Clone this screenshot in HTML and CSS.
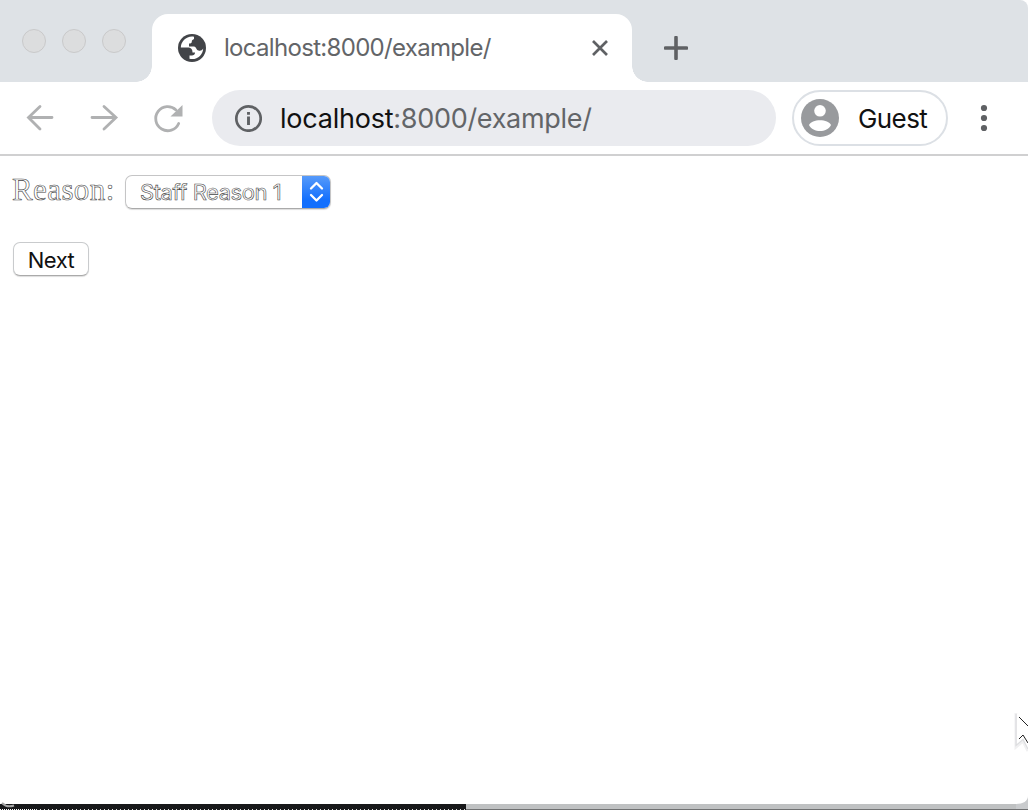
FILE: index.html
```html
<!DOCTYPE html>
<html lang="en">
<head>
<meta charset="utf-8">
<title>localhost:8000/example/</title>
<link rel="stylesheet" href="styles.css">
</head>
<body>
<div class="desktop">
  <div class="window">
    <header class="tabstrip">
      <div class="lights"><i class="light"></i><i class="light"></i><i class="light"></i></div>
      <div class="tab">
        <svg class="globe" width="28" height="28" viewBox="0 0 28 28"><circle cx="14" cy="14" r="14" fill="#424448"/><path d="M16 2.800C9 1.500 3 7 2.800 13.500H9.500C13 13.500 14.500 15 14.500 18.500H17C17 21 15.500 21.500 11.500 21.500V24.800C19 26.500 25 21 25.200 14.500C24 16.500 22.500 17 20.500 16.500C18 16 18.300 12.500 16 12.500H11V9.500C13 9.500 13.800 9 13.800 7.500C13.800 6 15 5.500 16 5Z" fill="#fff"/></svg>
        <span class="title">localhost:8000/example/</span>
        <svg class="close" width="18" height="18" viewBox="0 0 18 18"><path d="M2 2 16 16M16 2 2 16" stroke="#5f6164" stroke-width="2.700" fill="none"/></svg>
      </div>
      <svg class="plus" width="24" height="24" viewBox="0 0 24 24"><path d="M12 1.500V22.500M1.500 12H22.500" stroke="#5f6164" stroke-width="3.600" stroke-linecap="round"/></svg>
    </header>
    <nav class="toolbar">
      <svg class="nav-icons" width="160" height="32" viewBox="0 0 160 32" fill="none" stroke="#b0b1b2" stroke-width="2.800" stroke-linecap="round"><path d="M16 4.500 4.500 15.500 16 27M5 15.500H28"/><path d="M80 4.500 92 15.500 80 27M91 15.500H68"/><path d="M152 8A12 12 0 1 0 154.700 21.500"/><path d="M158.500 3V14.500H146.500Z" fill="#b0b1b2" stroke="none"/></svg>
      <div class="address">
        <svg width="28" height="28" viewBox="0 0 28 28"><circle cx="14.500" cy="14.500" r="12.200" fill="none" stroke="#5f6164" stroke-width="2.700"/><path d="M14.500 12.500V21M14.500 8V10.700" stroke="#5f6164" stroke-width="2.900"/></svg>
        <span class="url"><b>localhost</b>:8000/example/</span>
      </div>
      <div class="profile">
        <svg width="38" height="38" viewBox="0 0 38 38"><circle cx="19" cy="19" r="19" fill="#989a9d"/><circle cx="19" cy="11.800" r="5.800" fill="#fff"/><path d="M8 26C10.500 19.500 27.500 19.500 30 26C26 34 12 34 8 26Z" fill="#fff"/></svg>
        <span class="guest">Guest</span>
      </div>
      <svg class="menu" width="8" height="28" viewBox="0 0 8 28" fill="#5f6164"><circle cx="4" cy="4" r="3.100"/><circle cx="4" cy="14" r="3.100"/><circle cx="4" cy="24" r="3.100"/></svg>
    </nav>
    <main class="page">
      <div class="row">
        <span class="label">Reason:</span>
        <div class="select">
          <span class="value">Staff Reason 1</span>
          <span class="stepper"><svg width="16" height="22" viewBox="0 0 16 22" fill="none" stroke="#fff" stroke-width="2.300" stroke-linecap="round" stroke-linejoin="round"><path d="M2 7.500 7.500 2 13 7.500M2 14 7.500 19.500 13 14"/></svg></span>
        </div>
      </div>
      <button class="next">Next</button>
    </main>
  </div>
  <svg class="edge" width="1028" height="14" viewBox="0 0 1028 14"><path d="M0 8H466V14H0Z" fill="#17181a"/><path d="M466 8H1028V13H466Z" fill="#bfc1c2"/><path d="M466 13H1028V14H466Z" fill="#707172"/><path d="M1028 0V13H1016V8C1023 8 1028 5 1028 0Z" fill="#c9cbcd"/><path d="M0 13.500H36" stroke="#fff" stroke-dasharray="1 1"/><path d="M36 13.500H466" stroke="#ddd" stroke-dasharray="1 3"/><path d="M2 7Q7 12 14 9.500" fill="none" stroke="#a7a7a7" stroke-width="2"/></svg>
  <svg class="cursor" width="14" height="42" viewBox="0 0 14 42"><path d="M2 2V36L9 30L14 40" fill="none" stroke="#f0f0f1" stroke-width="3"/><path d="M3 2V34L9 28L14 38V13Z" fill="#fff"/><path d="M2 3V34.500L9 28.500L14 38" fill="none" stroke="#dcdddf" stroke-width="1.200"/><path d="M5 6 14 15M5 28 9 24 14 32" fill="none" stroke="#222" stroke-width="1"/></svg>
</div>
</body>
</html>
```
FILE: styles.css
```css
* { box-sizing: border-box; }
body { margin: 0; font-family: Inter, "Liberation Sans", sans-serif; }
svg { display: block; flex: none; }
.desktop { position: relative; width: 1028px; height: 810px; overflow: hidden; background: #fff; }
.window { display: flex; flex-direction: column; height: 804px; }
.tabstrip { display: flex; height: 82px; padding-top: 14px; background: #dee2e6; border-top-right-radius: 8px; }
.lights { display: flex; gap: 16px; width: 152px; padding: 15px 0 0 22px; }
.light { width: 24px; height: 24px; border: 1px solid #c9c9ca; border-radius: 50%; background: #dcddde; }
.tab { position: relative; display: flex; align-items: center; width: 480px; height: 68px; padding: 0 23px 0 26px; border-radius: 16px 16px 0 0; background: #fff; }
.tab::before, .tab::after { content: ""; position: absolute; bottom: 0; width: 16px; height: 16px; }
.tab::before { left: -16px; background: radial-gradient(circle at 0 0, transparent 15.5px, #fff 16px); }
.tab::after { right: -16px; background: radial-gradient(circle at 100% 0, transparent 15.5px, #fff 16px); }
.title { margin-left: 18px; padding-bottom: 1px; font-size: 24px; letter-spacing: -0.69px; color: #636568; white-space: nowrap; }
.close { margin-left: auto; }
.plus { margin: 22px 0 0 32px; }
.toolbar { display: flex; align-items: center; height: 74px; padding: 0 0 0 24px; border-bottom: 2px solid #d0d0d1; }
.address { display: flex; align-items: center; width: 564px; height: 56px; margin-left: 28px; padding-left: 22px; border-radius: 28px; background: #eaebef; }
.url { margin-left: 18px; font-size: 27px; letter-spacing: -0.3px; color: #636568; white-space: nowrap; }
.url b { font-weight: 400; letter-spacing: -0.23px; color: #111; }
.profile { display: flex; align-items: center; width: 156px; height: 56px; margin-left: 16px; padding-left: 7px; border: 2px solid #dce0e5; border-radius: 28px; }
.guest { margin-left: 19px; font-size: 26px; letter-spacing: -0.6px; color: #111; }
.menu { margin-left: 32px; }
.page { padding: 19px 0 0 12px; }
.row { display: flex; height: 67px; }
.label { width: 113px; font: 31px/30px "Liberation Serif", serif; letter-spacing: 0.4px; color: #fff; -webkit-text-stroke: 0.6px #444; }
.select { display: flex; justify-content: space-between; width: 206px; height: 34px; border: 1px solid #c5c5c6; border-bottom-color: #aaa; border-radius: 7px; overflow: hidden; box-shadow: 0 1px 1px #ddd; }
.value { padding-left: 14px; font-size: 22px; line-height: 33px; letter-spacing: -0.45px; white-space: nowrap; color: #fff; -webkit-text-stroke: 0.6px #444; }
.stepper { display: grid; place-items: center; width: 29px; height: 34px; margin: -1px -1px 0 0; background: linear-gradient(#599cfa, #126ffd 75%); }
.next { display: block; width: 76px; height: 34px; margin-left: 1px; padding: 1px 0 0; border: 1px solid #c9cbcd; border-bottom-color: #aaa; border-radius: 7px; background: #fff; font: 22px/33px Inter, sans-serif; letter-spacing: -0.5px; color: #111; box-shadow: 0 1px 1px #ddd; }
.edge { position: absolute; left: 0; bottom: 0; }
.cursor { position: absolute; right: 0; top: 711px; }
```
